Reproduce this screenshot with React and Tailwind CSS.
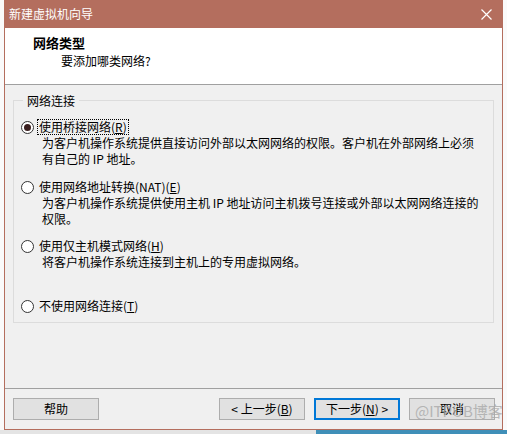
import React from 'react';

const font = { fontFamily: '"Noto Sans CJK SC", "Microsoft YaHei", sans-serif' };

function Radio({ checked }) {
  return (
    <span className="relative inline-flex h-[13px] w-[13px] shrink-0 items-center justify-center rounded-full border border-[#333] bg-white">
      {checked && <span className="h-[7px] w-[7px] rounded-full bg-[#3a1f1f]" />}
    </span>
  );
}

function Option({ checked, label, hotkey, focus, lines, className = '' }) {
  return (
    <div className={className}>
      <div className="flex h-[16px] items-center">
        <Radio checked={checked} />
        <span
          className={`ml-[3px] leading-[14px] whitespace-nowrap ${
            focus ? 'border border-dotted border-black px-[1px]' : 'border border-transparent px-[1px]'
          }`}
        >
          {label}(<span className="underline">{hotkey}</span>)
        </span>
      </div>
      {lines && (
        <div className="pl-[21px] leading-[16px] whitespace-nowrap">
          {lines.map((l) => (
            <div key={l}>{l}</div>
          ))}
        </div>
      )}
    </div>
  );
}

function Btn({ children, primary, className = '' }) {
  return (
    <button
      className={`flex h-[22px] w-[86px] items-center justify-center text-[12px] text-black bg-[#e1e1e1] ${
        primary ? 'border-2 border-[#0078d7]' : 'border border-[#adadad]'
      } ${className}`}
    >
      {children}
    </button>
  );
}

export default function App() {
  return (
    <div className="relative h-[434px] w-[507px] overflow-hidden bg-[#fafafa] text-[12px] text-black" style={font}>
      <div className="ml-[4px] flex h-[430px] w-[499px] flex-col border-x border-b border-[#b46e5e] bg-[#f0f0f0]">
        {/* title bar */}
        <div className="-mx-px flex h-[28px] items-center justify-between bg-[#b46e5e] pl-[5px] pr-[10px] text-white">
          <span className="text-[12px]">新建虚拟机向导</span>
          <svg width="11" height="11" viewBox="0 0 11 11" className="mr-[1px]">
            <path d="M0.5 0.5L10.5 10.5M10.5 0.5L0.5 10.5" stroke="white" strokeWidth="1.2" />
          </svg>
        </div>

        {/* header */}
        <div className="h-[57px] border-b border-[#a0a0a0] bg-white pl-[28px] pt-[6px]">
          <div className="text-[13px] font-bold leading-[18px]">网络类型</div>
          <div className="pl-[28px] leading-[18px]">要添加哪类网络?</div>
        </div>

        {/* body */}
        <div className="flex flex-1 flex-col px-[8px]">
          <fieldset className="mt-[8px] border border-[#dcdcdc] pl-[7px] pb-[8px] pt-[11px]">
            <legend className="ml-[2px] px-[4px] leading-[15px]">网络连接</legend>
            <Option
              checked
              focus
              label="使用桥接网络"
              hotkey="R"
              lines={['为客户机操作系统提供直接访问外部以太网网络的权限。客户机在外部网络上必须', '有自己的 IP 地址。']}
            />
            <Option
              className="mt-[12px]"
              label="使用网络地址转换(NAT)"
              hotkey="E"
              lines={['为客户机操作系统提供使用主机 IP 地址访问主机拨号连接或外部以太网网络连接的', '权限。']}
            />
            <Option
              className="mt-[11px]"
              label="使用仅主机模式网络"
              hotkey="H"
              lines={['将客户机操作系统连接到主机上的专用虚拟网络。']}
            />
            <Option className="mt-[28px]" label="不使用网络连接" hotkey="T" />
          </fieldset>

          <div className="mt-auto border-t border-[#a0a0a0] mx-[-8px]" />
          <div className="flex h-[40px] items-start pt-[9px]">
            <Btn>帮助</Btn>
            <Btn className="ml-auto">&lt; 上一步(<span className="underline">B</span>)</Btn>
            <Btn primary className="ml-[9px]">下一步(<span className="underline">N</span>) &gt;</Btn>
            <Btn className="ml-[9px] mr-[-1px]">取消</Btn>
          </div>
        </div>
      </div>
      <div className="flex h-[4px]">
        <div className="w-[316px] bg-[#e4e4e4]" />
        <div className="flex-1 bg-[#3f8fb8]" />
      </div>
      <div
        className="pointer-events-none absolute left-[415px] top-[401px] text-[15px] leading-[20px] text-[#a8a8a8]/80"
        style={{ fontFamily: '"Noto Sans CJK SC", sans-serif' }}
      >
        @ITPUB博客
      </div>
    </div>
  );
}
